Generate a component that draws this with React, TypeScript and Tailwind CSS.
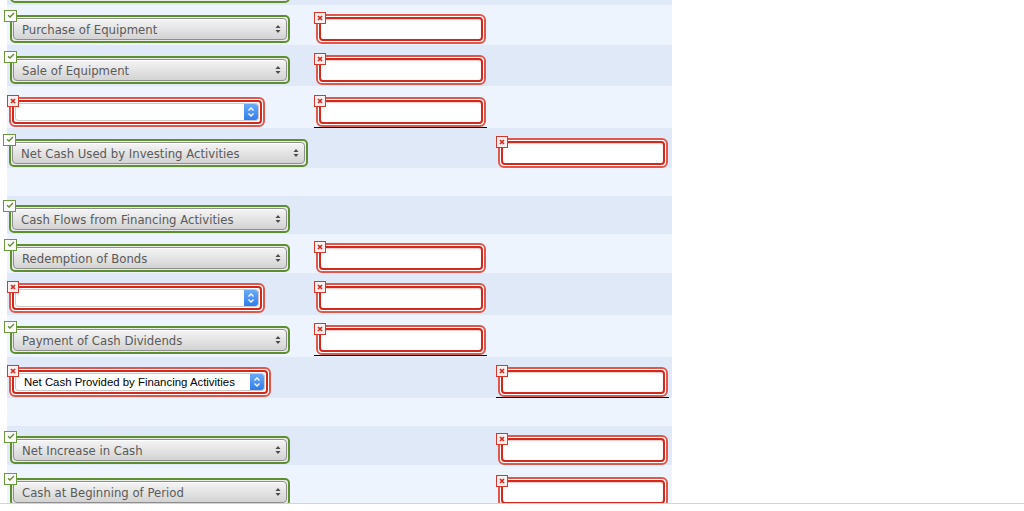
import type { ReactNode } from 'react';

const LIGHT = 'bg-[#edf4fe]';
const DARK = 'bg-[#e0e9f7]';

function OkMark() {
  return (
    <span className="absolute -left-[8px] -top-[7px] z-10 flex h-[12px] w-[13px] items-start justify-center border border-[#6b9a3c] bg-white pt-px">
      <svg width="8" height="6" viewBox="0 0 8 6">
        <path d="M1 3.2 L3 5 L7 1" fill="none" stroke="#5b8c2a" strokeWidth="1.3" />
      </svg>
    </span>
  );
}

function BadMark() {
  return (
    <span className="absolute -left-[4px] -top-[4px] z-10 flex h-[12px] w-[12px] items-center justify-center border border-[#d9372b] bg-[#fdf0ef]">
      <svg width="6" height="6" viewBox="0 0 6 6">
        <path d="M1 1 L5 5 M5 1 L1 5" stroke="#d52a1f" strokeWidth="1.7" />
      </svg>
    </span>
  );
}

function Arrows() {
  return (
    <svg width="6" height="10" viewBox="0 0 6 10">
      <path d="M3 1 L5.5 4 L0.5 4 Z" fill="#4a4a4a" />
      <path d="M3 9 L5.5 6 L0.5 6 Z" fill="#4a4a4a" />
    </svg>
  );
}

function Stepper() {
  return (
    <span className="flex h-full w-[14px] items-center justify-center rounded-r-[3px] bg-linear-to-b from-[#6aaaf9] to-[#2f7ded]">
      <svg width="8" height="12" viewBox="0 0 8 12">
        <path d="M1.5 4.5 L4 2 L6.5 4.5 M1.5 7.5 L4 10 L6.5 7.5" fill="none" stroke="#fff" strokeWidth="1.3" />
      </svg>
    </span>
  );
}

// answered dropdown, green ring
function GoodSelect({ label, w, ml = 'ml-[3px]' }: { label: string; w: string; ml?: string }) {
  return (
    <div className={`relative mt-px h-[28px] ${w} ${ml} rounded-[5px] border-2 border-[#5e8f2f] bg-[#ececec] p-px`}>
      <OkMark />
      <div className="flex h-full items-center justify-between rounded-[4px] border border-[#8e8e8e] bg-linear-to-b from-[#f5f5f5] to-[#d3d3d3] pl-[8px] pr-[5px] shadow-[inset_0_1px_0_#ffffff]">
        <span className="pt-[3px] font-['DejaVu_Sans',Verdana,sans-serif] text-[11.7px] leading-none text-[#5a5a5a]">{label}</span>
        <Arrows />
      </div>
    </div>
  );
}

// wrong dropdown, red double ring
function BadSelect({ label = '', w }: { label?: string; w: string }) {
  return (
    <div className={`relative ml-[2px] h-[30px] ${w} rounded-[6px] border-2 border-[#e2574c] bg-white p-px`}>
      <BadMark />
      <div className="h-full rounded-[4px] border-2 border-[#d3281c] bg-white p-px">
        <div className="flex h-full items-center justify-between rounded-[3px] border border-[#c9c9c9] bg-white pl-[8px]">
          <span className="pt-px font-['Liberation_Sans',Arial,sans-serif] text-[11.4px] leading-none text-black">{label}</span>
          <Stepper />
        </div>
      </div>
    </div>
  );
}

function BadInput() {
  return (
    <div className="relative h-[30px] w-[170px] rounded-[6px] border-2 border-[#e2574c] bg-white p-px">
      <BadMark />
      <div className="h-full rounded-[4px] border-2 border-[#d3281c] bg-white shadow-[inset_0_1px_1px_#f3c9c5]" />
    </div>
  );
}

function Amount({ line = false }: { line?: boolean }) {
  if (line) {
    return (
      <div className="ml-px w-fit border-b border-black pl-[2px] pr-px">
        <BadInput />
      </div>
    );
  }
  return (
    <div className="ml-[3px] w-fit">
      <BadInput />
    </div>
  );
}

function Row({ h, pt, dark, c1, c2, c3 }: { h: string; pt: string; dark: boolean; c1?: ReactNode; c2?: ReactNode; c3?: ReactNode }) {
  return (
    <div className={`${h} ${pt} ${dark ? DARK : LIGHT}`}>
      <div className="flex items-start">
        <div className="w-[306px] shrink-0">{c1}</div>
        <div className="w-[182px] shrink-0">{c2}</div>
        <div className="flex-1">{c3}</div>
      </div>
    </div>
  );
}

export default function App() {
  return (
    <div className="h-[511px] w-[1024px] overflow-hidden bg-white">
      <div className="h-[504px] overflow-hidden border-b border-[#cdd5df]">
        <div className="ml-[7px] w-[665px]">
          {/* tail of the row above, scrolled out of view */}
          <div className={`h-[5px] overflow-hidden ${DARK}`}>
            <div className="-mt-[26px]">
              <GoodSelect label="" w="w-[280px]" />
            </div>
          </div>
          <Row h="h-[40px]" pt="pt-[9px]" dark={false} c1={<GoodSelect label="Purchase of Equipment" w="w-[280px]" />} c2={<Amount />} />
          <Row h="h-[41px]" pt="pt-[10px]" dark c1={<GoodSelect label="Sale of Equipment" w="w-[280px]" />} c2={<Amount />} />
          <Row h="h-[42px]" pt="pt-[11px]" dark={false} c1={<BadSelect w="w-[256px]" />} c2={<Amount line />} />
          <Row h="h-[40px]" pt="pt-[10px]" dark c1={<GoodSelect label="Net Cash Used by Investing Activities" w="w-[299px]" ml="ml-[2px]" />} c3={<Amount />} />
          <Row h="h-[28px]" pt="pt-0" dark={false} />
          <Row h="h-[38px]" pt="pt-[8px]" dark c1={<GoodSelect label="Cash Flows from Financing Activities" w="w-[281px]" ml="ml-[2px]" />} />
          <Row h="h-[39px]" pt="pt-[9px]" dark={false} c1={<GoodSelect label="Redemption of Bonds" w="w-[280px]" />} c2={<Amount />} />
          <Row h="h-[42px]" pt="pt-[10px]" dark c1={<BadSelect w="w-[256px]" />} c2={<Amount />} />
          <Row h="h-[42px]" pt="pt-[10px]" dark={false} c1={<GoodSelect label="Payment of Cash Dividends" w="w-[280px]" />} c2={<Amount line />} />
          <Row h="h-[41px]" pt="pt-[10px]" dark c1={<BadSelect label="Net Cash Provided by Financing Activities" w="w-[262px]" />} c3={<Amount line />} />
          <Row h="h-[28px]" pt="pt-0" dark={false} />
          <Row h="h-[39px]" pt="pt-[9px]" dark c1={<GoodSelect label="Net Increase in Cash" w="w-[280px]" />} c3={<Amount />} />
          <Row h="h-[40px]" pt="pt-[12px]" dark={false} c1={<GoodSelect label="Cash at Beginning of Period" w="w-[280px]" />} c3={<Amount />} />
        </div>
      </div>
    </div>
  );
}
